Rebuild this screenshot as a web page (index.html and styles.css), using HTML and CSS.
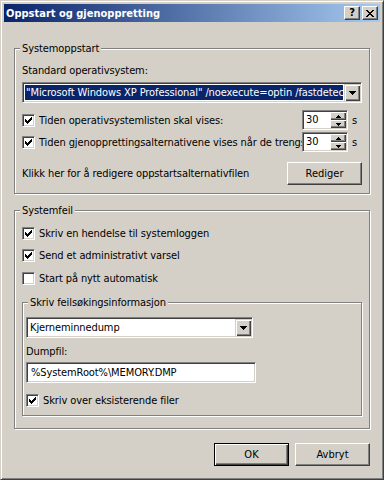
FILE: index.html
```html
<!DOCTYPE html>
<html>
<head>
  <link rel="stylesheet" href="styles.css">
</head>
<body>
  <div class="window">
    <div class="titlebar">
      <span class="title">Oppstart og gjenoppretting</span>
      <div class="caption-buttons">
        <span class="caption-btn help">?</span>
        <span class="caption-btn close">
          <svg width="8" height="7" viewBox="0 0 8 7"><path d="M0 0h2v1H0zM6 0h2v1H6zM1 1h2v1H1zM5 1h2v1H5zM2 2h4v1H2zM3 3h2v1H3zM2 4h4v1H2zM1 5h2v1H1zM5 5h2v1H5zM0 6h2v1H0zM6 6h2v1H6z"/></svg>
        </span>
      </div>
    </div>

    <div class="content">
      <fieldset class="group startup">
        <legend>Systemoppstart</legend>
        <div class="field-label">Standard operativsystem:</div>
        <div class="combo os-combo">
          <div class="combo-text"><span class="selection">"Microsoft Windows XP Professional" /noexecute=optin /fastdetect</span></div>
          <span class="combo-btn"><svg width="7" height="4" viewBox="0 0 7 4"><path d="M0 0h7v1H0zM1 1h5v1H1zM2 2h3v1H2zM3 3h1v1H3z"/></svg></span>
        </div>

        <div class="row spin-row">
          <label class="check">
            <span class="box"><svg width="7" height="7" viewBox="0 0 7 7"><path d="M6 0h1v1H6zM5 1h2v1H5zM0 2h1v1H0zM4 2h3v1H4zM0 3h2v1H0zM3 3h3v1H3zM0 4h5v1H0zM1 5h3v1H1zM2 6h1v1H2z"/></svg></span>
            <span class="check-text">Tiden operativsystemlisten skal vises:</span>
          </label>
          <div class="spin">
            <span class="spin-value">30</span>
            <span class="spin-btns">
              <span class="spin-btn"><svg width="5" height="3" viewBox="0 0 5 3"><path d="M2 0h1v1H2zM1 1h3v1H1zM0 2h5v1H0z"/></svg></span>
              <span class="spin-btn"><svg width="5" height="3" viewBox="0 0 5 3"><path d="M0 0h5v1H0zM1 1h3v1H1zM2 2h1v1H2z"/></svg></span>
            </span>
          </div>
          <span class="unit">s</span>
        </div>

        <div class="row spin-row second">
          <label class="check">
            <span class="box"><svg width="7" height="7" viewBox="0 0 7 7"><path d="M6 0h1v1H6zM5 1h2v1H5zM0 2h1v1H0zM4 2h3v1H4zM0 3h2v1H0zM3 3h3v1H3zM0 4h5v1H0zM1 5h3v1H1zM2 6h1v1H2z"/></svg></span>
            <span class="check-text">Tiden gjenopprettingsalternativene vises når de trengs:</span>
          </label>
          <div class="spin">
            <span class="spin-value">30</span>
            <span class="spin-btns">
              <span class="spin-btn"><svg width="5" height="3" viewBox="0 0 5 3"><path d="M2 0h1v1H2zM1 1h3v1H1zM0 2h5v1H0z"/></svg></span>
              <span class="spin-btn"><svg width="5" height="3" viewBox="0 0 5 3"><path d="M0 0h5v1H0zM1 1h3v1H1zM2 2h1v1H2z"/></svg></span>
            </span>
          </div>
          <span class="unit">s</span>
        </div>

        <div class="row edit-row">
          <span class="edit-text">Klikk her for å redigere oppstartsalternativfilen</span>
          <button class="btn">Rediger</button>
        </div>
      </fieldset>

      <fieldset class="group failure">
        <legend>Systemfeil</legend>
        <label class="check check-row first">
          <span class="box"><svg width="7" height="7" viewBox="0 0 7 7"><path d="M6 0h1v1H6zM5 1h2v1H5zM0 2h1v1H0zM4 2h3v1H4zM0 3h2v1H0zM3 3h3v1H3zM0 4h5v1H0zM1 5h3v1H1zM2 6h1v1H2z"/></svg></span>
          <span class="check-text">Skriv en hendelse til systemloggen</span>
        </label>
        <label class="check check-row second">
          <span class="box"><svg width="7" height="7" viewBox="0 0 7 7"><path d="M6 0h1v1H6zM5 1h2v1H5zM0 2h1v1H0zM4 2h3v1H4zM0 3h2v1H0zM3 3h3v1H3zM0 4h5v1H0zM1 5h3v1H1zM2 6h1v1H2z"/></svg></span>
          <span class="check-text">Send et administrativt varsel</span>
        </label>
        <label class="check check-row third">
          <span class="box"></span>
          <span class="check-text">Start på nytt automatisk</span>
        </label>

        <fieldset class="group debug">
          <legend>Skriv feilsøkingsinformasjon</legend>
          <div class="combo dump-combo">
            <div class="combo-text"><span class="plain">Kjerneminnedump</span></div>
            <span class="combo-btn"><svg width="7" height="4" viewBox="0 0 7 4"><path d="M0 0h7v1H0zM1 1h5v1H1zM2 2h3v1H2zM3 3h1v1H3z"/></svg></span>
          </div>
          <div class="field-label dump-label">Dumpfil:</div>
          <div class="textbox">%SystemRoot%\MEMORY.DMP</div>
          <label class="check overwrite">
            <span class="box"><svg width="7" height="7" viewBox="0 0 7 7"><path d="M6 0h1v1H6zM5 1h2v1H5zM0 2h1v1H0zM4 2h3v1H4zM0 3h2v1H0zM3 3h3v1H3zM0 4h5v1H0zM1 5h3v1H1zM2 6h1v1H2z"/></svg></span>
            <span class="check-text">Skriv over eksisterende filer</span>
          </label>
        </fieldset>
      </fieldset>

      <div class="actions">
        <button class="btn default">OK</button>
        <button class="btn">Avbryt</button>
      </div>
    </div>
  </div>
</body>
</html>
```

FILE: styles.css
```css
* {
  box-sizing: border-box;
}

body {
  margin: 0;
  background: #d4d0c8;
  font-family: "DejaVu Sans Condensed", "DejaVu Sans", sans-serif;
  font-size: 11px;
  line-height: 13px;
  letter-spacing: -0.1px;
  color: #000;
}

.window {
  width: 384px;
  height: 480px;
  display: flex;
  flex-direction: column;
  padding: 3px;
  background: #d4d0c8;
  border: 1px solid;
  border-color: #d4d0c8 #404040 #404040 #d4d0c8;
  box-shadow: inset 1px 1px 0 #fff, inset -1px -1px 0 #808080;
}

/* title bar */

.titlebar {
  height: 18px;
  display: flex;
  align-items: center;
  padding: 0 2px 0 2px;
  background: linear-gradient(to right, #0a246a, #a6caf0);
}

.title {
  color: #fff;
  font-weight: bold;
  letter-spacing: 0;
}

.caption-buttons {
  margin-left: auto;
  display: flex;
  gap: 2px;
}

.caption-btn {
  width: 16px;
  height: 14px;
  display: flex;
  align-items: center;
  justify-content: center;
  background: #d4d0c8;
  border: 1px solid;
  border-color: #fff #404040 #404040 #fff;
  box-shadow: inset -1px -1px 0 #808080;
}

.caption-btn.help {
  font-weight: bold;
  font-size: 11px;
  padding-bottom: 1px;
}

.caption-btn.close svg {
  margin-right: 1px;
}

/* content */

.content {
  flex: 1;
  display: flex;
  flex-direction: column;
  padding: 20px 10px 0 10px;
}

.group {
  margin: 0;
  min-width: 0;
  padding: 9px 7px 8px 7px;
  border: 1px solid #808080;
  box-shadow: 1px 1px 0 #fff, inset 1px 1px 0 #fff;
}

.group legend {
  padding: 0 2px;
  margin-left: -2px;
  background: #d4d0c8;
  line-height: 13px;
}

.field-label {
  height: 13px;
}

/* sunken controls */

.combo,
.spin,
.textbox,
.box {
  background: #fff;
  border: 1px solid;
  border-color: #808080 #fff #fff #808080;
  box-shadow: inset 1px 1px 0 #404040, inset -1px -1px 0 #d4d0c8;
}

.combo {
  height: 21px;
  display: flex;
  padding: 1px;
}

.combo-text {
  flex: 1;
  min-width: 0;
  padding: 1px;
  display: flex;
}

.selection {
  flex: 1;
  padding-left: 1px;
  background: #0a246a;
  color: #fff;
  white-space: nowrap;
  overflow: hidden;
  line-height: 15px;
}

.plain {
  padding-left: 1px;
  line-height: 15px;
}

.combo-btn {
  width: 16px;
  height: 17px;
  display: flex;
  align-items: center;
  justify-content: center;
  background: #d4d0c8;
  box-shadow: inset 1px 1px 0 #d4d0c8, inset 2px 2px 0 #fff, inset -1px -1px 0 #404040, inset -2px -2px 0 #808080;
}

.os-combo {
  margin-top: 5px;
}

.row {
  display: flex;
  align-items: center;
}

.spin-row {
  margin-top: 7px;
  height: 20px;
}

.spin-row.second {
  margin-top: 2px;
}

.check {
  display: flex;
  align-items: center;
  white-space: nowrap;
}

.spin-row .check {
  flex: 1;
  min-width: 0;
  overflow: hidden;
}

.box {
  flex: none;
  width: 13px;
  height: 13px;
  display: flex;
  align-items: center;
  justify-content: center;
  margin-right: 4px;
}

.check-text {
  line-height: 13px;
}

.spin {
  flex: none;
  width: 46px;
  height: 20px;
  display: flex;
  padding: 1px;
}

.spin-value {
  flex: 1;
  padding-left: 2px;
  line-height: 16px;
}

.spin-btns {
  width: 16px;
  display: flex;
  flex-direction: column;
}

.spin-btn {
  height: 8px;
  display: flex;
  align-items: center;
  justify-content: center;
  background: #d4d0c8;
  box-shadow: inset 1px 1px 0 #fff, inset -1px -1px 0 #404040, inset -2px -2px 0 #808080;
}

.unit {
  flex: none;
  width: 14px;
  padding-left: 4px;
}

.edit-row {
  margin-top: 10px;
  justify-content: space-between;
}

/* push buttons */

.btn {
  width: 75px;
  height: 23px;
  padding: 0;
  font: inherit;
  color: #000;
  background: #d4d0c8;
  border: 1px solid;
  border-color: #fff #404040 #404040 #fff;
  box-shadow: inset -1px -1px 0 #808080;
}

.btn.default {
  border-color: #000;
  box-shadow: inset 1px 1px 0 #fff, inset -1px -1px 0 #404040, inset -2px -2px 0 #808080;
}

/* system failure */

.failure {
  margin-top: 10px;
  padding: 10px 7px 12px 7px;
}

.check-row.second {
  margin-top: 9px;
}

.check-row.third {
  margin-top: 10px;
}

.check-row.first {
  margin-top: 0;
}

.debug {
  margin-top: 11px;
  padding: 8px 3px 8px 3px;
}

.debug legend {
  margin-left: 2px;
}

.dump-combo {
  width: 227px;
}

.dump-label {
  margin-top: 7px;
}

.textbox {
  width: 230px;
  height: 21px;
  margin-top: 4px;
  padding: 2px 4px;
  line-height: 15px;
}

.overwrite {
  margin-top: 11px;
}

.actions {
  margin-top: 14px;
  display: flex;
  justify-content: flex-end;
  gap: 6px;
}
```
